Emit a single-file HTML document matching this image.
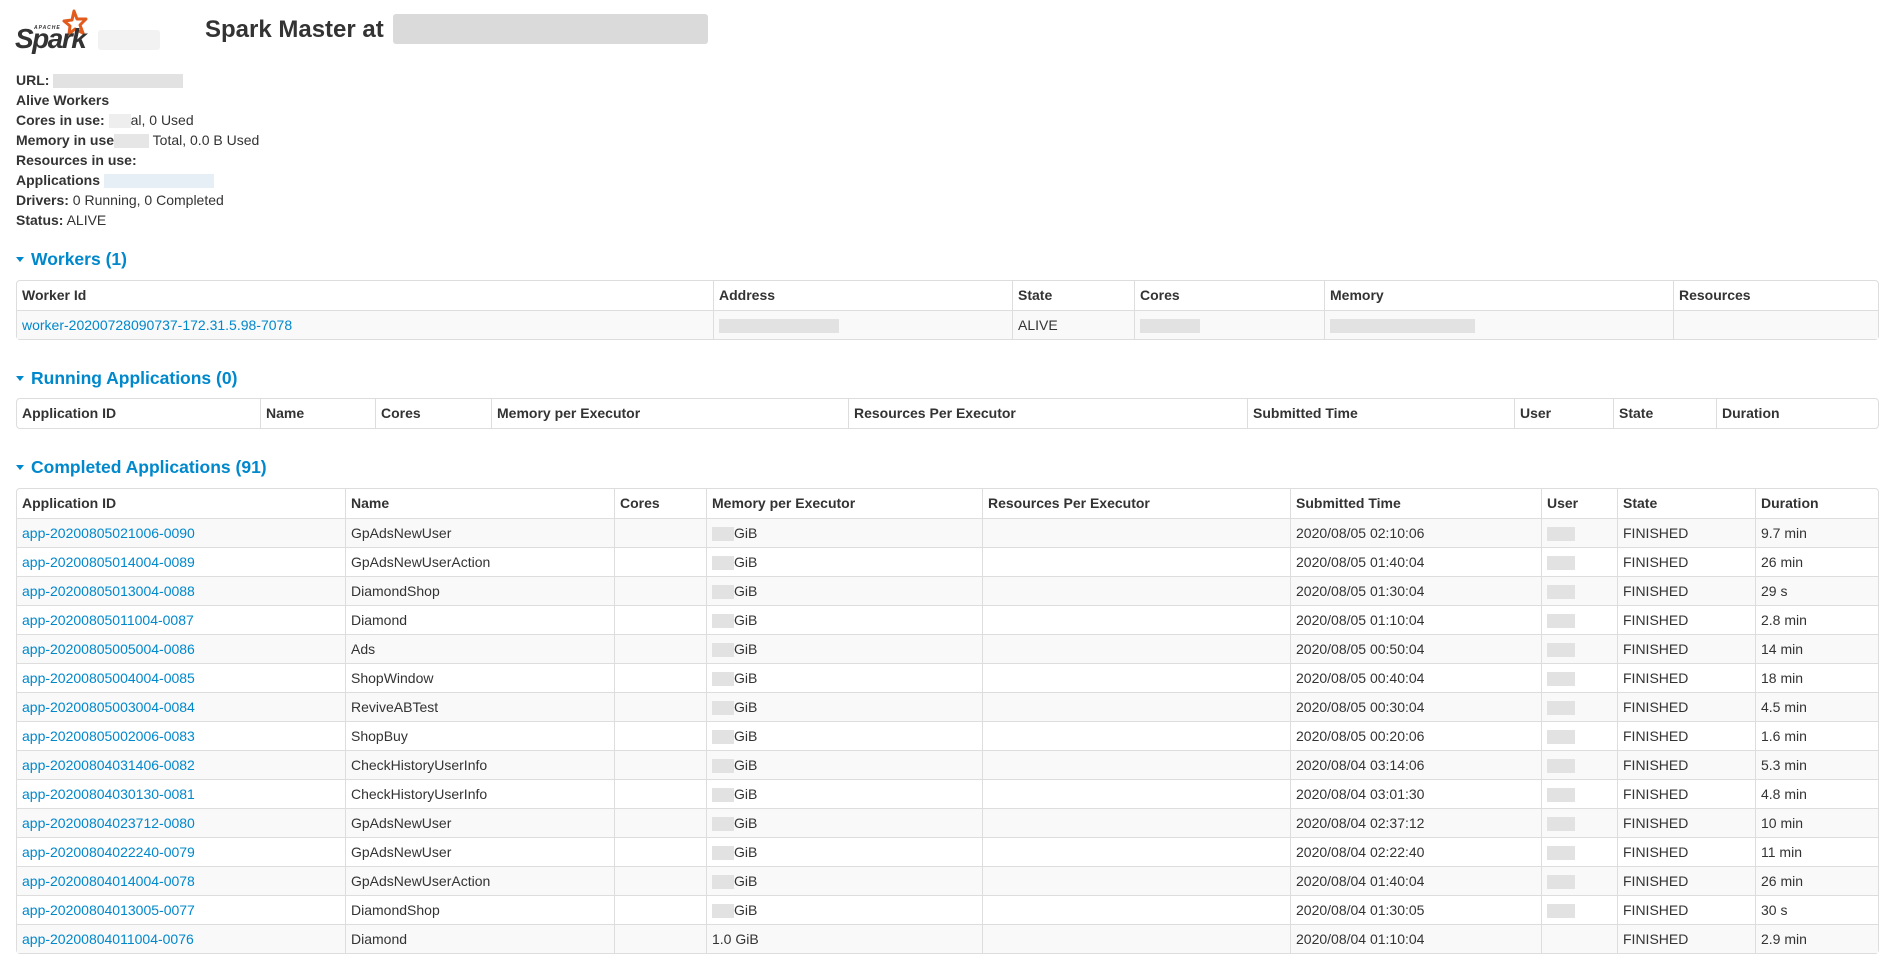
<!DOCTYPE html>
<html><head><meta charset="utf-8"><style>
*{box-sizing:border-box;margin:0;padding:0}
body{width:1898px;height:934px;overflow:hidden;background:#fff;font-family:"Liberation Sans",Arial,sans-serif;font-size:14px;line-height:20px;color:#333;position:relative}
.abs{position:absolute}
a{color:#0088cc;text-decoration:none}
h3{position:absolute;left:205px;top:14px;font-size:24px;font-weight:bold;line-height:32px;color:#333}
.info{position:absolute;left:16px;top:70px;line-height:20px}
.info b{font-weight:bold}
h4{position:absolute;left:16px;font-size:17.5px;font-weight:bold;color:#0088cc;line-height:22px}
h4 .tri{display:inline-block;width:0;height:0;border-left:4px solid transparent;border-right:4px solid transparent;border-top:5px solid #0088cc;vertical-align:middle;margin:0 7px 0 0;position:relative;top:-1px}
table{position:absolute;left:16px;width:1863px;border-collapse:separate;border-spacing:0;table-layout:fixed;border:1px solid #ddd;border-radius:4px}
td,th{height:29px;padding:4px 5px;text-align:left;border-left:1px solid #ddd;border-top:1px solid #ddd;white-space:nowrap;overflow:hidden;vertical-align:top;line-height:20px}
th{font-weight:bold;border-top:none}
tr td:first-child,tr th:first-child{border-left:none}
tbody tr:nth-child(odd) td{background:#f9f9f9}
.bl{display:inline-block;height:14px;background:#e2e2e2;vertical-align:middle}
.blob{position:absolute;background:#e6e6e6;border-radius:3px;opacity:.85}
</style></head><body>
<div class="abs" style="left:14px;top:8px;width:80px;height:46px">
<svg width="80" height="46" viewBox="0 0 80 46">
<path d="M60 3 L63 11 L72 11 L66 17 L69 25 L61 21 L55 26 L56 18 L50 13 L58 12 Z" fill="none" stroke="#e25a1c" stroke-width="3" stroke-linejoin="round"/>
<text x="20" y="21" font-family="Liberation Sans" font-size="5" font-weight="bold" font-style="italic" fill="#333" letter-spacing="1">APACHE</text>
<text x="1" y="40" font-family="Liberation Sans" font-size="28" font-weight="bold" font-style="italic" fill="#333" letter-spacing="-1.5">Spark</text>
</svg></div>
<div class="blob" style="left:98px;top:30px;width:62px;height:20px;background:#f0f0f0"></div>
<h3>Spark Master at</h3>
<div class="blob" style="left:393px;top:14px;width:315px;height:30px;background:#d4d4d4"></div>
<div class="info">
<div><b>URL:</b> <span class="bl" style="width:130px"></span></div>
<div><b>Alive Workers</b></div>
<div><b>Cores in use:</b> <span class="bl" style="width:22px;background:#eee"></span>al, 0 Used</div>
<div><b>Memory in use</b><span class="bl" style="width:35px;background:#e6e6e6"></span> Total, 0.0 B Used</div>
<div><b>Resources in use:</b></div>
<div><b>Applications</b> <span class="bl" style="width:110px;background:#e6eef6"></span></div>
<div><b>Drivers:</b> 0 Running, 0 Completed</div>
<div><b>Status:</b> ALIVE</div>
</div>

<h4 style="top:248px"><span class="tri"></span>Workers (1)</h4>
<table style="top:280px">
<colgroup><col style="width:696px"><col style="width:299px"><col style="width:122px"><col style="width:190px"><col style="width:349px"><col></colgroup>
<thead><tr><th>Worker Id</th><th>Address</th><th>State</th><th>Cores</th><th>Memory</th><th>Resources</th></tr></thead>
<tbody><tr><td><a>worker-20200728090737-172.31.5.98-7078</a></td><td><span class="bl" style="width:120px"></span></td><td>ALIVE</td><td><span class="bl" style="width:60px"></span></td><td><span class="bl" style="width:145px"></span></td><td></td></tr></tbody>
</table>

<h4 style="top:367px"><span class="tri"></span>Running Applications (0)</h4>
<table style="top:398px">
<colgroup><col style="width:243px"><col style="width:115px"><col style="width:116px"><col style="width:357px"><col style="width:399px"><col style="width:267px"><col style="width:99px"><col style="width:103px"><col></colgroup>
<thead><tr><th>Application ID</th><th>Name</th><th>Cores</th><th>Memory per Executor</th><th>Resources Per Executor</th><th>Submitted Time</th><th>User</th><th>State</th><th>Duration</th></tr></thead>
</table>

<h4 style="top:456px"><span class="tri"></span>Completed Applications (91)</h4>
<table style="top:488px">
<colgroup><col style="width:328px"><col style="width:269px"><col style="width:92px"><col style="width:276px"><col style="width:308px"><col style="width:251px"><col style="width:76px"><col style="width:138px"><col></colgroup>
<thead><tr><th>Application ID</th><th>Name</th><th>Cores</th><th>Memory per Executor</th><th>Resources Per Executor</th><th>Submitted Time</th><th>User</th><th>State</th><th>Duration</th></tr></thead>
<tbody>
<tr><td><a>app-20200805021006-0090</a></td><td>GpAdsNewUser</td><td></td><td><span class="bl" style="width:22px"></span>GiB</td><td></td><td>2020/08/05 02:10:06</td><td><span class="bl" style="width:28px"></span></td><td>FINISHED</td><td>9.7 min</td></tr>
<tr><td><a>app-20200805014004-0089</a></td><td>GpAdsNewUserAction</td><td></td><td><span class="bl" style="width:22px"></span>GiB</td><td></td><td>2020/08/05 01:40:04</td><td><span class="bl" style="width:28px"></span></td><td>FINISHED</td><td>26 min</td></tr>
<tr><td><a>app-20200805013004-0088</a></td><td>DiamondShop</td><td></td><td><span class="bl" style="width:22px"></span>GiB</td><td></td><td>2020/08/05 01:30:04</td><td><span class="bl" style="width:28px"></span></td><td>FINISHED</td><td>29 s</td></tr>
<tr><td><a>app-20200805011004-0087</a></td><td>Diamond</td><td></td><td><span class="bl" style="width:22px"></span>GiB</td><td></td><td>2020/08/05 01:10:04</td><td><span class="bl" style="width:28px"></span></td><td>FINISHED</td><td>2.8 min</td></tr>
<tr><td><a>app-20200805005004-0086</a></td><td>Ads</td><td></td><td><span class="bl" style="width:22px"></span>GiB</td><td></td><td>2020/08/05 00:50:04</td><td><span class="bl" style="width:28px"></span></td><td>FINISHED</td><td>14 min</td></tr>
<tr><td><a>app-20200805004004-0085</a></td><td>ShopWindow</td><td></td><td><span class="bl" style="width:22px"></span>GiB</td><td></td><td>2020/08/05 00:40:04</td><td><span class="bl" style="width:28px"></span></td><td>FINISHED</td><td>18 min</td></tr>
<tr><td><a>app-20200805003004-0084</a></td><td>ReviveABTest</td><td></td><td><span class="bl" style="width:22px"></span>GiB</td><td></td><td>2020/08/05 00:30:04</td><td><span class="bl" style="width:28px"></span></td><td>FINISHED</td><td>4.5 min</td></tr>
<tr><td><a>app-20200805002006-0083</a></td><td>ShopBuy</td><td></td><td><span class="bl" style="width:22px"></span>GiB</td><td></td><td>2020/08/05 00:20:06</td><td><span class="bl" style="width:28px"></span></td><td>FINISHED</td><td>1.6 min</td></tr>
<tr><td><a>app-20200804031406-0082</a></td><td>CheckHistoryUserInfo</td><td></td><td><span class="bl" style="width:22px"></span>GiB</td><td></td><td>2020/08/04 03:14:06</td><td><span class="bl" style="width:28px"></span></td><td>FINISHED</td><td>5.3 min</td></tr>
<tr><td><a>app-20200804030130-0081</a></td><td>CheckHistoryUserInfo</td><td></td><td><span class="bl" style="width:22px"></span>GiB</td><td></td><td>2020/08/04 03:01:30</td><td><span class="bl" style="width:28px"></span></td><td>FINISHED</td><td>4.8 min</td></tr>
<tr><td><a>app-20200804023712-0080</a></td><td>GpAdsNewUser</td><td></td><td><span class="bl" style="width:22px"></span>GiB</td><td></td><td>2020/08/04 02:37:12</td><td><span class="bl" style="width:28px"></span></td><td>FINISHED</td><td>10 min</td></tr>
<tr><td><a>app-20200804022240-0079</a></td><td>GpAdsNewUser</td><td></td><td><span class="bl" style="width:22px"></span>GiB</td><td></td><td>2020/08/04 02:22:40</td><td><span class="bl" style="width:28px"></span></td><td>FINISHED</td><td>11 min</td></tr>
<tr><td><a>app-20200804014004-0078</a></td><td>GpAdsNewUserAction</td><td></td><td><span class="bl" style="width:22px"></span>GiB</td><td></td><td>2020/08/04 01:40:04</td><td><span class="bl" style="width:28px"></span></td><td>FINISHED</td><td>26 min</td></tr>
<tr><td><a>app-20200804013005-0077</a></td><td>DiamondShop</td><td></td><td><span class="bl" style="width:22px"></span>GiB</td><td></td><td>2020/08/04 01:30:05</td><td><span class="bl" style="width:28px"></span></td><td>FINISHED</td><td>30 s</td></tr>
<tr><td><a>app-20200804011004-0076</a></td><td>Diamond</td><td></td><td>1.0 GiB</td><td></td><td>2020/08/04 01:10:04</td><td></td><td>FINISHED</td><td>2.9 min</td></tr>
</tbody>
</table>
</body></html>
